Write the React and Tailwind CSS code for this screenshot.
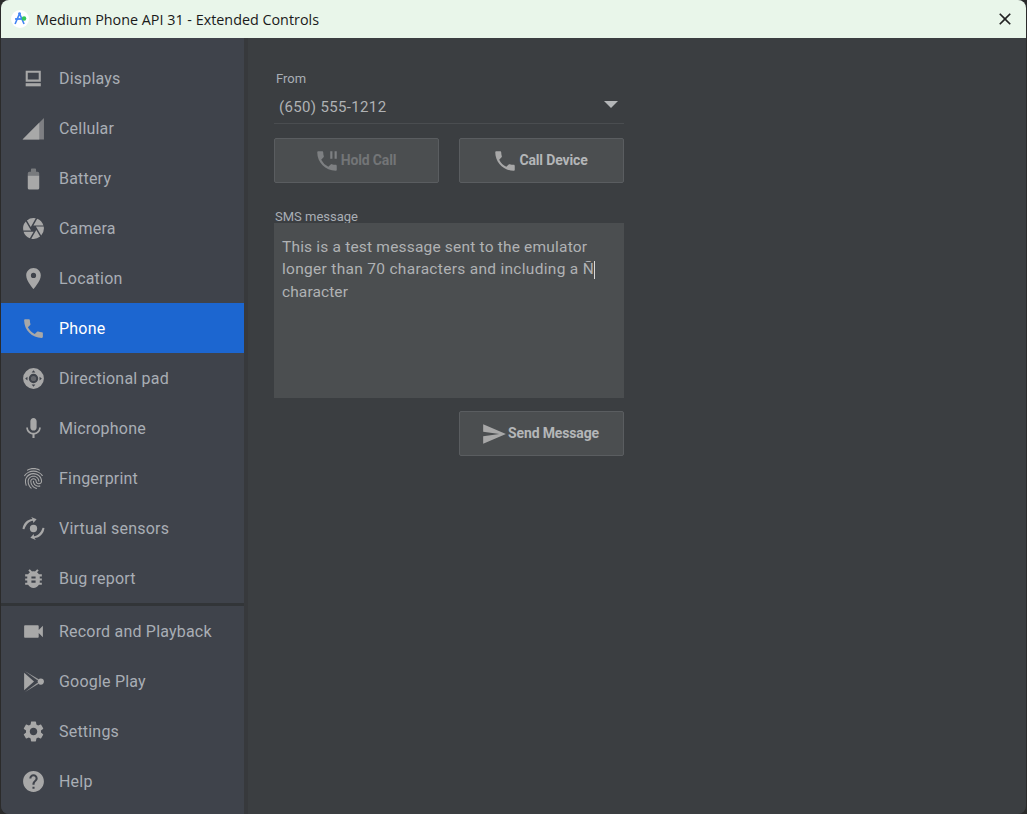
import React from "react";
import {
  MdCamera,
  MdLocationOn,
  MdPhone,
  MdMic,
  MdFingerprint,
  MdBugReport,
  MdVideocam,
  MdSettings,
  MdHelp,
  MdSend,
  MdPhonePaused,
  MdClose,
} from "react-icons/md";

function DisplayIcon() {
  return (
    <svg width="25" height="25" viewBox="0 0 24 24" fill="currentColor">
      <path fillRule="evenodd" d="M4.500 4.500h14.500v10.500h-14.500zM6.500 6.500v6.500h10.500v-6.500z" />
      <rect x="4.500" y="16.500" width="14.500" height="3" />
    </svg>
  );
}

function CellularIcon() {
  return (
    <svg width="25" height="25" viewBox="0 0 24 24" fill="currentColor">
      <path d="M1.500 22.500L22 2v20.500z" fillOpacity="0.6" />
      <path d="M1.500 22.500L17.500 6.500v16z" />
    </svg>
  );
}

function BatteryIcon() {
  return (
    <svg width="25" height="25" viewBox="0 0 24 24" fill="currentColor">
      <path d="M6.500 9v-2q0-1.500 1.500-1.500h1.500v-2q0-1 1-1h3q1 0 1 1v2h1.500q1.500 0 1.500 1.500v2z" fillOpacity="0.55" />
      <path d="M6.500 9h11v12q0 1.500-1.500 1.500h-8q-1.500 0-1.500-1.500z" />
    </svg>
  );
}

function DpadIcon() {
  return (
    <svg width="25" height="25" viewBox="0 0 24 24" fill="currentColor">
      <path
        fillRule="evenodd"
        d="M12 2a10 10 0 1 0 0 20a10 10 0 0 0 0-20zM12 7.500a4.500 4.500 0 1 1 0 9a4.500 4.500 0 0 1 0-9zM12 4l1.800 2.200h-3.600zM12 20l-1.800-2.200h3.600zM4 12l2.200-1.800v3.600zM20 12l-2.200 1.800v-3.600z"
      />
      <circle cx="12" cy="12" r="2.500" fillOpacity="0.35" />
    </svg>
  );
}

function SensorsIcon() {
  return (
    <svg width="25" height="25" viewBox="0 0 24 24" fill="currentColor">
      <circle cx="12" cy="12" r="3.500" />
      <path d="M1.500 12.500C2 7 6 3.200 11 2.800L9.800 1l5.200 2.200-3.200 3.600-.3-2.200C8 4.900 4.800 8 3.300 12.800z" />
      <path d="M22.500 11.500C22 17 18 20.800 13 21.200l1.200 1.800-5.200-2.200 3.200-3.600.3 2.200c3.500-.3 6.700-3.400 8.200-8.200z" />
    </svg>
  );
}

function PlayIcon() {
  return (
    <svg width="25" height="25" viewBox="0 0 24 24" fill="currentColor">
      <path d="M3 3.500L12.500 12L3 20.500z" />
      <path d="M3.500 1.800L17 9.800l-1.200 1z" fillOpacity="0.85" />
      <path d="M3.500 22.200L17 14.200l-1.200-1z" fillOpacity="0.85" />
      <circle cx="19" cy="12" r="3" />
    </svg>
  );
}

function AppLogo() {
  return (
    <svg width="18" height="18" viewBox="0 0 20 20">
      <circle cx="10" cy="10" r="10" fill="#ffffff" />
      <circle cx="9.500" cy="4" r="1.500" fill="#4285f4" />
      <path d="M9.500 4L4.500 15.500M9.500 4l5 11.500" stroke="#4285f4" strokeWidth="1.800" fill="none" />
      <rect x="4.500" y="9" width="10" height="2" fill="#4285f4" />
      <circle cx="14.500" cy="9.500" r="2.500" fill="#34c759" />
    </svg>
  );
}

const topItems = [
  { label: "Displays", icon: <DisplayIcon /> },
  { label: "Cellular", icon: <CellularIcon /> },
  { label: "Battery", icon: <BatteryIcon /> },
  { label: "Camera", icon: <MdCamera size={25} /> },
  { label: "Location", icon: <MdLocationOn size={25} /> },
  { label: "Phone", icon: <MdPhone size={25} />, active: true },
  { label: "Directional pad", icon: <DpadIcon /> },
  { label: "Microphone", icon: <MdMic size={25} /> },
  { label: "Fingerprint", icon: <MdFingerprint size={25} /> },
  { label: "Virtual sensors", icon: <SensorsIcon /> },
  { label: "Bug report", icon: <MdBugReport size={25} /> },
];

const bottomItems = [
  { label: "Record and Playback", icon: <MdVideocam size={25} /> },
  { label: "Google Play", icon: <PlayIcon /> },
  { label: "Settings", icon: <MdSettings size={25} /> },
  { label: "Help", icon: <MdHelp size={25} /> },
];

function NavItem({ item }) {
  return (
    <div
      className={`flex h-[50px] items-center pl-[20px] ${
        item.active ? "bg-[#1c66d0] text-white" : "text-[#a9aeb5]"
      }`}
    >
      <span className="flex w-[38px] shrink-0 text-[#a8a8a8]">{item.icon}</span>
      <span className="pt-[2px] text-[16px] tracking-[0.2px]">{item.label}</span>
    </div>
  );
}

function ActionButton({ icon, label, disabled }) {
  return (
    <button
      className={`flex h-[45px] w-[165px] items-center justify-center gap-px rounded-[2px] border border-[#5a5d60] bg-[#4b4e50] pr-[3px] text-[14px] font-bold tracking-[-0.15px] ${
        disabled ? "text-[#737577]" : "text-[#b4b6b8]"
      }`}
    >
      <span className={disabled ? "text-[#7e8082]" : "text-[#a8a8a8]"}>{icon}</span>
      {label}
    </button>
  );
}

export default function App() {
  return (
    <div className="h-[814px] w-[1027px] overflow-hidden bg-[#2b2b2b] font-['Roboto',sans-serif]">
      <div className="ml-px mr-px flex h-[814px] flex-col overflow-hidden rounded-[8px] bg-[#3b3e41]">
        <div className="flex h-[38px] shrink-0 items-center bg-[#e9f6ea] pl-[10px] pr-[11px] text-[#1a1a1a]">
          <AppLogo />
          <span className="ml-[7px] pt-[2px] font-['Open_Sans',sans-serif] text-[14.350px]">
            Medium Phone API 31 - Extended Controls
          </span>
          <MdClose size={20} className="ml-auto text-[#222222]" />
        </div>

        <div className="flex min-h-0 flex-1">
          <aside className="flex w-[243px] shrink-0 flex-col bg-[#3f434b] pt-[15px]">
            {topItems.map((item) => (
              <NavItem key={item.label} item={item} />
            ))}
            <div className="h-[3px] shrink-0 bg-[#323538]" />
            {bottomItems.map((item) => (
              <NavItem key={item.label} item={item} />
            ))}
          </aside>

          <div className="w-[4px] shrink-0 bg-[#37393c]" />

          <main className="flex-1 pl-[26px] pt-[32px]">
            <div className="flex w-[350px] flex-col">
              <label className="pl-[2px] text-[13px] leading-[18px] text-[#a9aeb5]">From</label>
              <div className="flex h-[36px] items-center justify-between border-b border-[#4a4d50] pl-[5px] pr-[6px]">
                <span className="pt-[4px] text-[15px] tracking-[0.35px] text-[#b0b2b4]">(650) 555-1212</span>
                <span className="mb-[2px] h-0 w-0 border-x-[7px] border-t-[7px] border-x-transparent border-t-[#b4b6b8]" />
              </div>

              <div className="mt-[14px] flex justify-between">
                <ActionButton disabled label="Hold Call" icon={<MdPhonePaused size={26} />} />
                <ActionButton label="Call Device" icon={<MdPhone size={26} />} />
              </div>

              <label className="mt-[25px] pl-px text-[13px] leading-[18px] text-[#a9aeb5]">SMS message</label>
              <div className="-mt-[3px] h-[175px] bg-[#4b4e50] px-[8px] pt-[13px] text-[15.500px] leading-[22px] text-[#b0b2b4]">
                <div className="tracking-[0.19px]">This is a test message sent to the emulator</div>
                <div className="tracking-[0.3px]">
                  longer than 70 characters and including a Ñ
                  <span className="inline-block h-[18px] border-l border-[#d8d8d8] align-middle" />
                </div>
                <div className="mt-px tracking-[0.1px]">character</div>
              </div>

              <div className="mt-[13px] flex justify-end">
                <ActionButton label="Send Message" icon={<MdSend size={26} />} />
              </div>
            </div>
          </main>
        </div>
      </div>
    </div>
  );
}
